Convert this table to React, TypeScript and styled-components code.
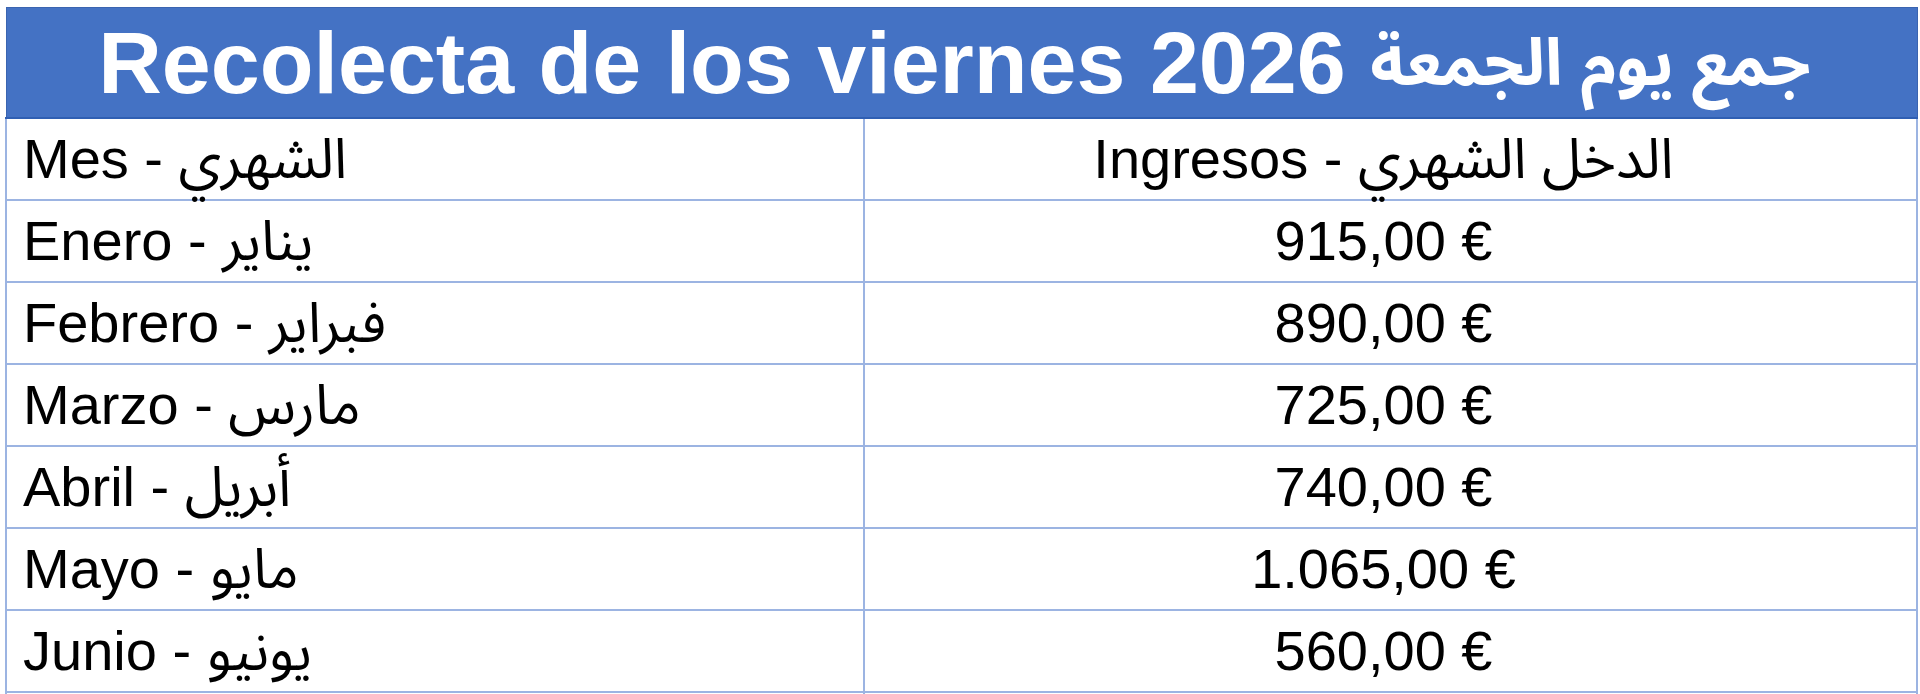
import React from "react";
import styled, { createGlobalStyle } from "styled-components";

const GlobalStyle = createGlobalStyle`
    html, body {
        margin: 0;
        padding: 0;
        background: #ffffff;
        overflow: hidden;
    }
    body {
        font-family: "Liberation Sans", "Noto Sans Arabic", "DejaVu Sans", Arial, sans-serif;
        color: #000000;
    }
`;

const rows = [
    { month: "Enero - يناير", amount: "915,00 €" },
    { month: "Febrero - فبراير", amount: "890,00 €" },
    { month: "Marzo - مارس", amount: "725,00 €" },
    { month: "Abril - أبريل", amount: "740,00 €" },
    { month: "Mayo - مايو", amount: "1.065,00 €" },
    { month: "Junio - يونيو", amount: "560,00 €" },
    { month: "", amount: "" },
];

const App = () => {
    return (
        <>
            <GlobalStyle />
            <Page>
                <Sheet>
                    <colgroup>
                        <col style={{ width: "858px" }} />
                        <col />
                    </colgroup>
                    <thead>
                        <tr>
                            <TitleCell colSpan={2}>
                                <TitleText>
                                    Recolecta de los viernes 2026 <ArabicTitle>جمع يوم الجمعة</ArabicTitle>
                                </TitleText>
                            </TitleCell>
                        </tr>
                    </thead>
                    <tbody>
                        <tr>
                            <Cell>Mes - الشهري</Cell>
                            <Cell $center>Ingresos - الدخل الشهري</Cell>
                        </tr>
                        {rows.map((row, i) => (
                            <tr key={i}>
                                <Cell>{row.month}</Cell>
                                <Cell $center>{row.amount}</Cell>
                            </tr>
                        ))}
                    </tbody>
                </Sheet>
            </Page>
        </>
    );
};

const Page = styled.main`
    padding: 7px 2px 0 5px;
`;

const Sheet = styled.table`
    width: 1913px;
    border-collapse: collapse;
    table-layout: fixed;
`;

const TitleCell = styled.th`
    height: 109px;
    padding: 0;
    background-color: #4472c4;
    border: 1px solid #3a64b0;
    border-bottom: 2px solid #2f5fb3;
    vertical-align: middle;
`;

const TitleText = styled.div`
    height: 100px;
    display: flex;
    align-items: center;
    justify-content: center;
    padding-right: 14px;
    color: #ffffff;
    font-family: "Liberation Sans", "Noto Sans Arabic", "DejaVu Sans", Arial, sans-serif;
    font-weight: 700;
    font-size: 88px;
    line-height: 100px;
    white-space: pre;
`;

const ArabicTitle = styled.span`
    font-size: 0.74em;
    line-height: 1;
`;

const Cell = styled.td<{ $center?: boolean }>`
    height: 80px;
    padding: 0;
    border: 2px solid #9cb4e2;
    font-size: 56px;
    line-height: 1;
    text-align: ${(p) => (p.$center ? "center" : "left")};
    padding-left: ${(p) => (p.$center ? "0" : "16px")};
    padding-right: ${(p) => (p.$center ? "14px" : "0")};
    white-space: nowrap;
`;

export default App;
